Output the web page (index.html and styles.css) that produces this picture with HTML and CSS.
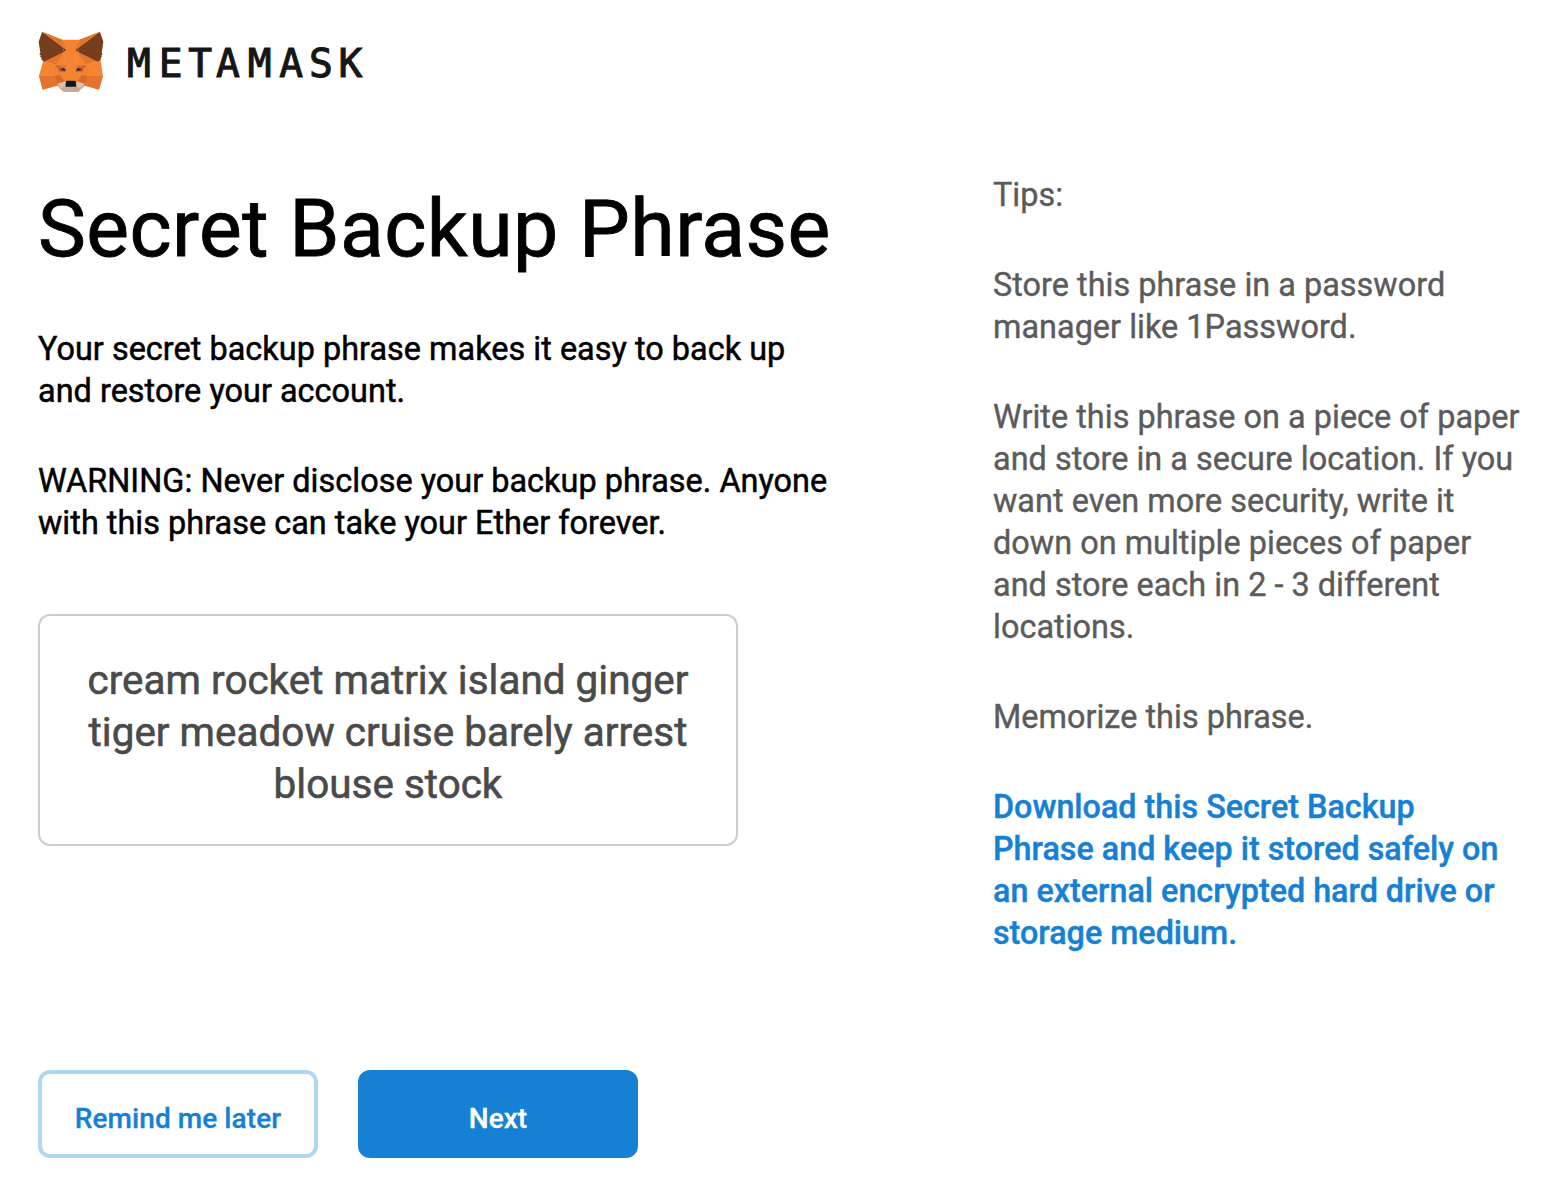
FILE: index.html
```html
<!DOCTYPE html>
<html lang="en">
<head>
<meta charset="utf-8">
<title>MetaMask</title>
<link rel="stylesheet" href="styles.css">
</head>
<body>
<main class="page">
  <header class="brand">
    <svg class="fox" viewBox="24 24 198 180" aria-hidden="true">
      <path fill="#f58430" d="M38 24 97 47H148L208 24 219 55 212 110 219 155 207 197 164 185 145 203H100L82 185 38 197 27 155 40 110 27 55Z"/>
      <path fill="#e27430" d="M38 24 97 47 109 76ZM208 24 148 47 136 76ZM42 109 105 80 77 122ZM204 109 140 80 168 122ZM27 155H74L82 184 38 197ZM219 155H171L164 184 207 197Z"/>
      <path fill="#763e1f" d="M36 24 109 78 96 86 42 113 33 105 36 102 30 99 33 95 28 91 31 86 26 53ZM210 24 136 78 149 86 204 113 213 105 210 102 216 99 213 95 218 91 215 86 220 53Z"/>
      <path fill="#d66a2d" d="M77 122 74 155 82 184 106 174 92 155ZM168 122 171 155 164 184 140 174 154 155Z"/>
      <path fill="#f58430" d="M77 124 91 153 74 155ZM168 124 155 153 171 155Z"/>
      <path fill="#e27430" d="M77 122H106L109 139 90 145ZM168 122H140L137 139 156 145Z"/>
      <path fill="#f58430" d="M92 145 107 143 106 170ZM154 145 138 143 140 170Z"/>
      <path fill="#cd6335" d="M77 122 105 132 109 142 91 145ZM168 122 141 132 137 142 155 145Z"/>
      <path fill="#233447" d="M88 137 102 131 107 142ZM158 137 143 131 138 142Z"/>
      <path fill="#d7c1b3" d="M82 179 106 172 108 188H138L140 172 164 179 145 203H100Z"/>
      <path fill="#c0ad9e" d="M105 188H141L151 192 145 203H100L94 192Z"/>
      <path fill="#161616" d="M109 170H137L139 188H106Z"/>
      <path fill="none" stroke="#e99a63" stroke-width="1" d="M40 113 77 122H106L97 48M206 113 168 122H140L148 48M77 122 27 155H74M168 122 219 155H171"/>
    </svg>
    <span class="wordmark"><span class="wide">M</span><span class="medium">E</span><span class="tight">T</span><span class="wide">A</span><span class="wide">M</span><span class="medium">A</span><span class="medium">S</span><span class="last">K</span></span>
  </header>
  <div class="content">
    <section class="phrase">
      <h1>Secret Backup Phrase</h1>
      <p>Your secret backup phrase makes it easy to back up<br>and restore your account.</p>
      <p>WARNING: Never disclose your backup phrase. Anyone<br>with this phrase can take your Ether forever.</p>
      <div class="words">cream rocket matrix island ginger<br>tiger meadow cruise barely arrest<br>blouse stock</div>
      <div class="actions">
        <button class="button secondary">Remind me later</button>
        <button class="button primary">Next</button>
      </div>
    </section>
    <aside class="tips">
      <p>Tips:</p>
      <p>Store this phrase in a password<br>manager like 1Password.</p>
      <p>Write this phrase on a piece of paper<br>and store in a secure location. If you<br>want even more security, write it<br>down on multiple pieces of paper<br>and store each in 2 - 3 different<br>locations.</p>
      <p>Memorize this phrase.</p>
      <p class="download">Download this Secret Backup<br>Phrase and keep it stored safely on<br>an external encrypted hard drive or<br>storage medium.</p>
    </aside>
  </div>
</main>
</body>
</html>
```

FILE: styles.css
```css
* { box-sizing: border-box; }
body { margin: 0; background: #fff; color: #000; font-family: Roboto, sans-serif; }
.page { height: 1186px; padding: 32px 0 0 38px; overflow: hidden; }
.brand { display: flex; align-items: center; height: 60px; gap: 23px; }
.fox { width: 66px; height: 60px; }
.wordmark { padding-top: 2px; color: #161616; font: 39.5px/60px "DejaVu Sans Mono", monospace; -webkit-text-stroke: 1.1px; }
.wide { letter-spacing: 7.9px; }
.medium { letter-spacing: 5.8px; }
.tight { letter-spacing: 3.9px; }
.content { display: grid; grid-template-columns: 955px 1fr; }
.phrase { padding-top: 89px; white-space: nowrap; }
h1 { margin: 0 0 51px; font-size: 80.6px; line-height: 96px; font-weight: 400; letter-spacing: .42px; -webkit-text-stroke: .9px; }
p { margin: 0 0 48px; font-size: 32.4px; line-height: 42px; letter-spacing: .03px; -webkit-text-stroke: .5px; }
.words { width: 700px; height: 232px; margin-top: 70px; padding: 39px 0; border: 2px solid #cdcdcd; border-radius: 12px; font-size: 40.4px; line-height: 52px; letter-spacing: .03px; text-align: center; color: #4a4a4a; -webkit-text-stroke: .6px; }
.actions { display: flex; gap: 40px; margin-top: 224px; }
.button { width: 280px; height: 88px; padding: 8px 0 0; border: 0; border-radius: 12px; font: 500 28px Roboto, sans-serif; -webkit-text-stroke: .3px; }
.secondary { border: 4px solid #b0d7f2; background: #fff; color: #1681d4; letter-spacing: .08px; }
.primary { background: #1681d4; color: #fff; }
.tips { padding-top: 82px; color: #5b5b5b; white-space: nowrap; }
.tips p { -webkit-text-stroke: .4px; }
.tips .download { color: #1681d4; font-size: 32.3px; font-weight: 500; letter-spacing: 0; }
```
